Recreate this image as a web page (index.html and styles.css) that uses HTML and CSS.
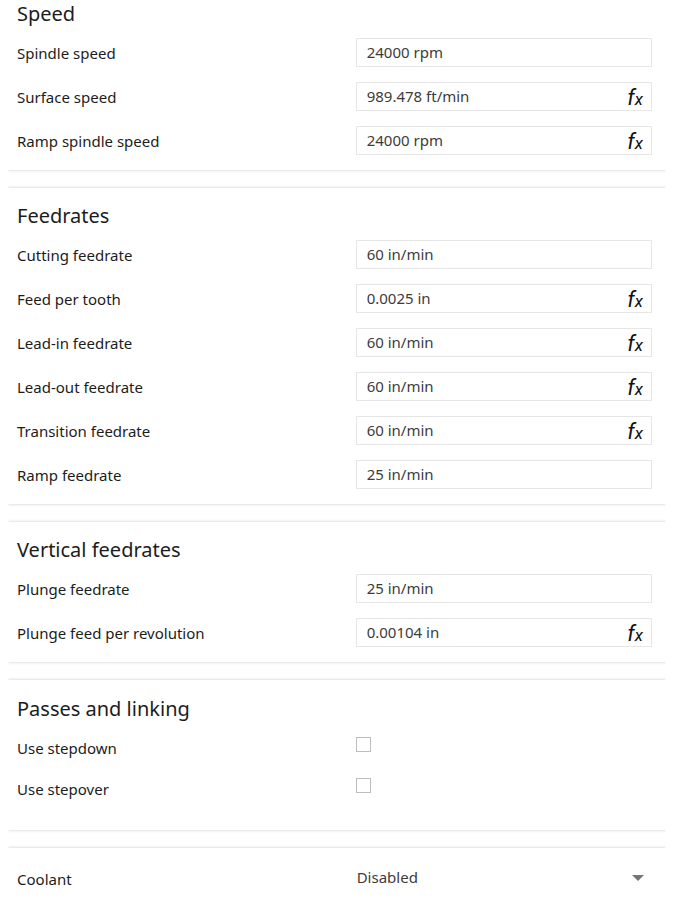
FILE: index.html
```html
<!DOCTYPE html>
<html lang="en">
<head>
<meta charset="utf-8">
<meta name="viewport" content="width=device-width, initial-scale=1">
<title>Feed and speed</title>
<link rel="stylesheet" href="styles.css">
</head>
<body>
<form class="settings">
  <section class="panel panel-first">
    <h2>Speed</h2>
    <div class="row"><label for="spindle">Spindle speed</label><div class="field"><input type="text" id="spindle" value="24000 rpm"></div></div>
    <div class="row"><label for="surface">Surface speed</label><div class="field"><input type="text" id="surface" value="989.478 ft/min"><button type="button" class="fx">f<span>x</span></button></div></div>
    <div class="row"><label for="rampspindle">Ramp spindle speed</label><div class="field"><input type="text" id="rampspindle" value="24000 rpm"><button type="button" class="fx">f<span>x</span></button></div></div>
  </section>
  <section class="panel">
    <h2>Feedrates</h2>
    <div class="row"><label for="cutting">Cutting feedrate</label><div class="field"><input type="text" id="cutting" value="60 in/min"></div></div>
    <div class="row"><label for="tooth">Feed per tooth</label><div class="field"><input type="text" id="tooth" value="0.0025 in"><button type="button" class="fx">f<span>x</span></button></div></div>
    <div class="row"><label for="leadin">Lead-in feedrate</label><div class="field"><input type="text" id="leadin" value="60 in/min"><button type="button" class="fx">f<span>x</span></button></div></div>
    <div class="row"><label for="leadout">Lead-out feedrate</label><div class="field"><input type="text" id="leadout" value="60 in/min"><button type="button" class="fx">f<span>x</span></button></div></div>
    <div class="row"><label for="transition">Transition feedrate</label><div class="field"><input type="text" id="transition" value="60 in/min"><button type="button" class="fx">f<span>x</span></button></div></div>
    <div class="row"><label for="ramp">Ramp feedrate</label><div class="field"><input type="text" id="ramp" value="25 in/min"></div></div>
  </section>
  <section class="panel">
    <h2>Vertical feedrates</h2>
    <div class="row"><label for="plunge">Plunge feedrate</label><div class="field"><input type="text" id="plunge" value="25 in/min"></div></div>
    <div class="row"><label for="plungerev">Plunge feed per revolution</label><div class="field"><input type="text" id="plungerev" value="0.00104 in"><button type="button" class="fx">f<span>x</span></button></div></div>
  </section>
  <section class="panel panel-checks">
    <h2>Passes and linking</h2>
    <div class="row"><label for="stepdown">Use stepdown</label><input type="checkbox" id="stepdown"></div>
    <div class="row"><label for="stepover">Use stepover</label><input type="checkbox" id="stepover"></div>
  </section>
  <section class="panel panel-last">
    <div class="row">
      <label for="coolant">Coolant</label>
      <div class="choice">
        <select id="coolant"><option>Disabled</option></select>
        <svg class="arrow" viewBox="0 0 12 6" aria-hidden="true"><path d="M0 0h12L6 6z"/></svg>
      </div>
    </div>
  </section>
</form>
</body>
</html>
```
FILE: styles.css
```css
* {
  box-sizing: border-box;
}

body {
  margin: 0;
  background: #fff;
  color: #1c1c1c;
  font-family: "Noto Sans", "Open Sans", sans-serif;
  font-size: 15px;
}

.settings {
  display: flex;
  flex-direction: column;
  gap: 18px;
  padding: 0 20px 0 8px;
  overflow: hidden;
}

.panel {
  padding: 14px 14px 0 9px;
  background: #fff;
  box-shadow: 0 0 3px rgba(0, 0, 0, 0.22);
  clip-path: inset(-4px 0);
}

.panel-first {
  padding-top: 0;
}

.panel-checks {
  padding-top: 15px;
  padding-bottom: 15px;
}

.panel-last {
  padding-top: 16px;
}

h2 {
  margin: 0 0 10px;
  font-size: 20px;
  font-weight: 400;
  line-height: 28px;
}

.row {
  display: grid;
  grid-template-columns: 8fr 7fr;
  align-items: start;
  height: 44px;
}

.panel-checks .row {
  height: 41px;
}

label {
  line-height: 30px;
}

.field {
  display: flex;
  height: 29px;
  border: 1px solid #e6e6e6;
}

.field input {
  flex: 1;
  min-width: 0;
  padding: 0 10px 2px;
  border: 0;
  background: none;
  color: #3c3c3c;
  font: inherit;
}

.fx {
  padding: 1px 8px 0;
  border: 0;
  background: none;
  color: #111;
  font: italic 22px/27px Roboto, "Liberation Sans", sans-serif;
}

.fx span {
  font-size: 17px;
}

input[type="checkbox"] {
  appearance: none;
  width: 15px;
  height: 15px;
  margin: 4px 0 0;
  border: 1px solid #bdbdbd;
  background: #fff;
}

.choice {
  position: relative;
}

.choice select {
  appearance: none;
  width: 100%;
  height: 26px;
  padding: 0 24px 0 1px;
  border: 0;
  background: none;
  color: #3c3c3c;
  font: inherit;
}

.arrow {
  position: absolute;
  top: 11px;
  right: 8px;
  width: 12px;
  height: 6px;
  fill: #757575;
  pointer-events: none;
}
```
